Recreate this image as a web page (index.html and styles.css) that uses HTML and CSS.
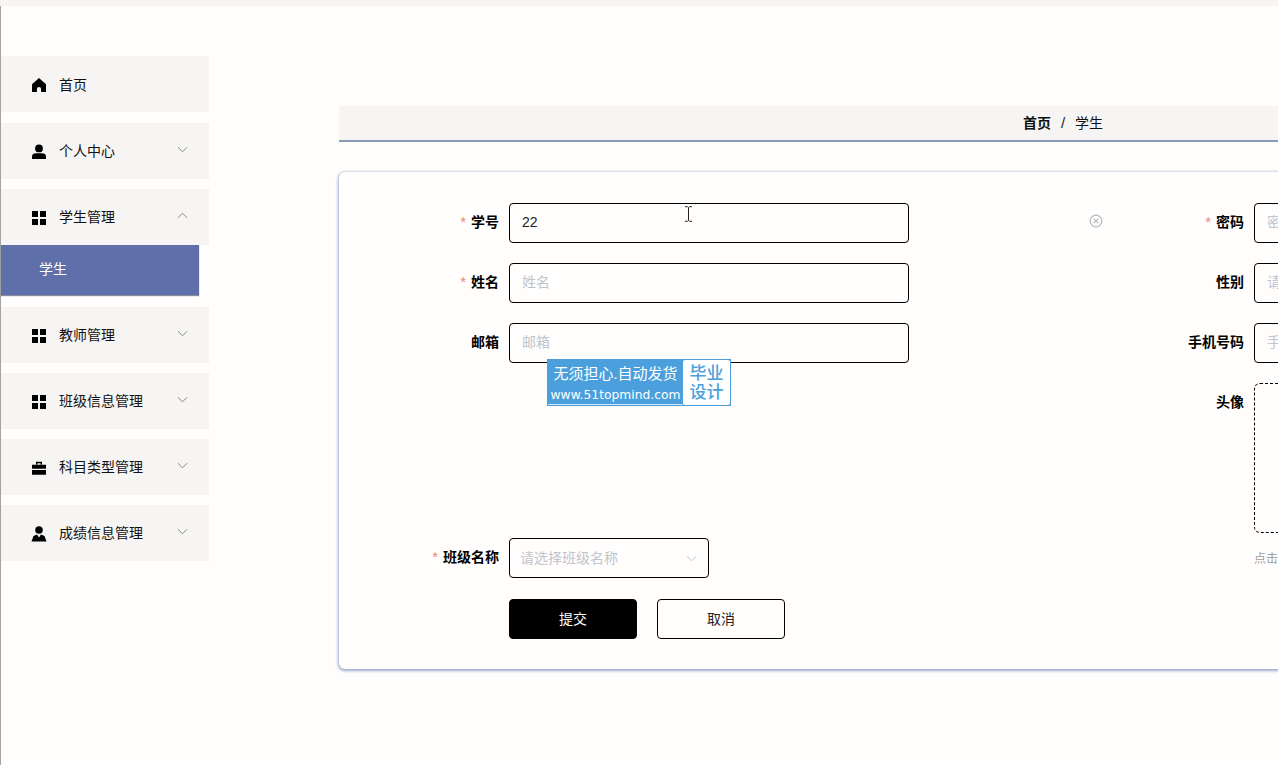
FILE: index.html
```html
<!DOCTYPE html>
<html lang="zh-CN">

<head>
    <meta charset="UTF-8">
    <title>学生</title>
    <link rel="stylesheet" href="styles.css">
</head>

<body>

    <div class="topbar"></div>

    <div class="layout">
        <div class="sidebar">
            <div class="menu-item">
                <svg class="menu-icon" viewBox="0 0 16 16"><path d="M8 1 15 7.300V15h-4.900v-3a2.100 2.100 0 0 0-4.200 0v3H1V7.300z"/></svg>
                <span>首页</span>
            </div>
            <div class="menu-item">
                <svg class="menu-icon" viewBox="0 0 16 16"><circle cx="8" cy="4.400" r="3.900"/><path d="M1 15v-2.400C1 10.400 2.800 9.300 5 9.300h6c2.200 0 4 1.100 4 3.300V15z"/></svg>
                <span>个人中心</span>
                <svg class="arrow" viewBox="0 0 12 12"><path d="M1 3.500 6 8.500 11 3.500"/></svg>
            </div>
            <div class="menu-item">
                <svg class="menu-icon" viewBox="0 0 16 16"><path d="M1 1h6v6H1zM9 1h6v6H9zM1 9h6v6H1zM9 9h6v6H9z"/></svg>
                <span>学生管理</span>
                <svg class="arrow" viewBox="0 0 12 12"><path d="M1 8.500 6 3.500 11 8.500"/></svg>
            </div>
            <div class="submenu-item">学生</div>
            <div class="menu-item after-sub">
                <svg class="menu-icon" viewBox="0 0 16 16"><path d="M1 1h6v6H1zM9 1h6v6H9zM1 9h6v6H1zM9 9h6v6H9z"/></svg>
                <span>教师管理</span>
                <svg class="arrow" viewBox="0 0 12 12"><path d="M1 3.500 6 8.500 11 3.500"/></svg>
            </div>
            <div class="menu-item">
                <svg class="menu-icon" viewBox="0 0 16 16"><path d="M1 1h6v6H1zM9 1h6v6H9zM1 9h6v6H1zM9 9h6v6H9z"/></svg>
                <span>班级信息管理</span>
                <svg class="arrow" viewBox="0 0 12 12"><path d="M1 3.500 6 8.500 11 3.500"/></svg>
            </div>
            <div class="menu-item">
                <svg class="menu-icon" viewBox="0 0 16 16"><path d="M5 4.500V1.800h6v2.700H9.600V3.200H6.400v1.300zM1 4.800h14v4H1zM1 10h14v4.800H1z"/></svg>
                <span>科目类型管理</span>
                <svg class="arrow" viewBox="0 0 12 12"><path d="M1 3.500 6 8.500 11 3.500"/></svg>
            </div>
            <div class="menu-item">
                <svg class="menu-icon" viewBox="0 0 16 16"><circle cx="8" cy="4" r="3.800"/><path d="M0.500 15.500 2.500 10 6 8.500 8 11.500 10 8.500 13.500 10 15.500 15.500z"/></svg>
                <span>成绩信息管理</span>
                <svg class="arrow" viewBox="0 0 12 12"><path d="M1 3.500 6 8.500 11 3.500"/></svg>
            </div>
        </div>

        <div class="main">
            <div class="breadcrumb">
                <b>首页</b>
                <span class="sep">/</span>
                <span>学生</span>
            </div>

            <div class="card">
                <div class="form-grid">
                    <div class="field">
                        <label><i>*</i>学号</label>
                        <div class="input">22</div>
                        <svg class="clear-icon" viewBox="0 0 14 14"><circle cx="7" cy="7" r="5.800"/><path d="M4.800 4.800 9.200 9.200M9.200 4.800 4.800 9.200"/></svg>
                    </div>
                    <div class="field">
                        <label><i>*</i>密码</label>
                        <div class="input empty">密码</div>
                    </div>

                    <div class="field">
                        <label><i>*</i>姓名</label>
                        <div class="input empty">姓名</div>
                    </div>
                    <div class="field">
                        <label>性别</label>
                        <div class="input empty">请选择性别</div>
                    </div>

                    <div class="field">
                        <label>邮箱</label>
                        <div class="input empty">邮箱</div>
                    </div>
                    <div class="field">
                        <label>手机号码</label>
                        <div class="input empty">手机号码</div>
                    </div>

                    <div class="field tall"></div>
                    <div class="field tall">
                        <label>头像</label>
                        <div class="upload"></div>
                    </div>

                    <div class="field">
                        <label><i>*</i>班级名称</label>
                        <div class="select">
                            <span>请选择班级名称</span>
                            <svg class="select-arrow" viewBox="0 0 12 12"><path d="M1 3.500 6 8.500 11 3.500"/></svg>
                        </div>
                    </div>
                    <div class="field">
                        <label></label>
                        <div class="hint">点击上传头像</div>
                    </div>
                </div>

                <div class="buttons">
                    <button class="btn btn-submit">提交</button>
                    <button class="btn">取消</button>
                </div>
            </div>
        </div>
    </div>

    <!-- watermark over the form -->
    <div class="stamp">
        <div class="stamp-left">
            <div class="stamp-title">无须担心.自动发货</div>
            <div class="stamp-url">www.51topmind.com</div>
        </div>
        <div class="stamp-right">毕业<br>设计</div>
    </div>

    <svg class="cursor" viewBox="0 0 9 16"><path d="M1 .7h2.500L4.500 1.700 5.500 .7H8M4.500 1.700V14.300M1 15.300h2.500L4.500 14.300 5.500 15.300H8"/></svg>

</body>

</html>
```

FILE: styles.css
```css
html,
body {
    margin: 0;
    height: 765px;
    overflow: hidden;
}

body {
    font-family: "Liberation Sans", "Noto Sans CJK SC", sans-serif;
    font-size: 14px;
    color: #111;
    background-color: #fffefd;
    position: relative;
}

.topbar {
    height: 6px;
    background-color: #f6f5f4;
}

.layout {
    display: flex;
    height: 759px;
    border-left: 1px solid #a3a3a3;
}

/* sidebar */
.sidebar {
    width: 208px;
    flex-shrink: 0;
    padding-top: 50px;
}

.menu-item {
    display: flex;
    align-items: center;
    height: 56px;
    margin-bottom: 10px;
    padding-left: 30px;
    background-color: #f6f5f4;
    position: relative;
}

.menu-item:first-child {
    margin-bottom: 11px;
}

.menu-item span {
    margin-left: 12px;
    margin-bottom: 2px;
}

.menu-item:first-child span {
    margin-bottom: 0;
}

.menu-icon {
    width: 16px;
    height: 16px;
    margin-top: 2px;
    fill: #000;
}

.arrow {
    position: absolute;
    right: 21px;
    top: 21px;
    width: 11px;
    height: 11px;
    fill: none;
    stroke: #7d7d7d;
    stroke-width: 1;
}

.submenu-item {
    width: 198px;
    height: 50px;
    margin-top: -10px;
    padding-left: 38px;
    box-sizing: border-box;
    line-height: 48px;
    color: #fff;
    background-color: #5f6fa9;
    box-shadow: 0 1px 1px #8b8b9c;
}

.after-sub {
    margin-top: 12px;
}

/* main */
.main {
    margin-left: 130px;
    padding-top: 100px;
    width: 1500px;
    flex-shrink: 0;
}

.breadcrumb {
    height: 34px;
    padding-left: 684px;
    line-height: 34px;
    background-color: #f6f5f4;
    border-bottom: 2px solid #8b9ab8;
}

.breadcrumb .sep {
    margin: 0 6px;
    font-size: 15px;
    color: #222;
}

.card {
    margin-top: 30px;
    padding: 31px 0 30px 10px;
    border-radius: 6px;
    background-color: #fffefd;
    box-shadow: 0 1px 3px 1px #9ca7cf;
}

.form-grid {
    display: grid;
    grid-template-columns: 745px 745px;
}

.field {
    display: flex;
    height: 40px;
    margin-bottom: 20px;
    position: relative;
}

.tall {
    height: 150px;
    margin-bottom: 5px;
}

label {
    width: 150px;
    margin-right: 10px;
    line-height: 38px;
    text-align: right;
    font-weight: bold;
    color: #000;
}

label i {
    margin-right: 5px;
    font-style: normal;
    font-weight: normal;
    font-size: 15px;
    color: #e8867c;
}

.input {
    width: 400px;
    height: 40px;
    padding: 0 12px;
    box-sizing: border-box;
    line-height: 37px;
    border: 1px solid #000;
    border-radius: 4px;
    color: #222;
}

.empty {
    color: #c0c4cc;
}

.clear-icon {
    position: absolute;
    left: 740px;
    top: 11px;
    width: 14px;
    height: 14px;
    fill: none;
    stroke: #b4b8be;
    stroke-width: 1.200;
}

.upload {
    width: 150px;
    height: 150px;
    box-sizing: border-box;
    border: 1px dashed #000;
    border-radius: 6px;
}

.select {
    display: flex;
    align-items: center;
    justify-content: space-between;
    width: 200px;
    height: 40px;
    padding: 0 11px 2px 10px;
    box-sizing: border-box;
    border: 1px solid #000;
    border-radius: 4px;
    color: #c0c4cc;
}

.select-arrow {
    width: 11px;
    height: 11px;
    margin-top: 2px;
    fill: none;
    stroke: #b9bcc3;
    stroke-width: 1;
}

.hint {
    line-height: 42px;
    font-size: 12px;
    color: #a0a0a0;
    white-space: nowrap;
}

.buttons {
    display: flex;
    gap: 20px;
    margin-top: 1px;
    margin-left: 160px;
}

.btn {
    width: 128px;
    height: 40px;
    padding: 0 0 2px;
    font-family: inherit;
    font-size: 14px;
    color: #222;
    background-color: #fffefd;
    border: 1px solid #000;
    border-radius: 4px;
}

.btn-submit {
    color: #fff;
    background-color: #000;
}

/* watermark */
.stamp {
    position: absolute;
    left: 547px;
    top: 359px;
    display: flex;
    width: 184px;
    height: 47px;
    box-sizing: border-box;
    padding: 1px;
    background-color: #4a9fdc;
}

.stamp-left {
    width: 135px;
    color: #fff;
    text-align: center;
}

.stamp-title {
    margin-top: 4px;
    font-size: 15px;
    line-height: 19px;
    white-space: nowrap;
}

.stamp-url {
    margin-top: 4px;
    font-family: "DejaVu Sans", sans-serif;
    font-size: 12.300px;
    line-height: 17px;
    white-space: nowrap;
    border-bottom: 1px solid #cfe6f6;
}

.stamp-right {
    width: 47px;
    height: 45px;
    border-radius: 2px;
    text-align: center;
    font-size: 17px;
    font-weight: 500;
    line-height: 19px;
    padding-top: 4px;
    box-sizing: border-box;
    color: #4a9fdc;
    background-color: #fff;
}

.cursor {
    position: absolute;
    left: 684px;
    top: 206px;
    width: 9px;
    height: 16px;
    fill: none;
    stroke: #222;
    stroke-width: 1;
}
```
